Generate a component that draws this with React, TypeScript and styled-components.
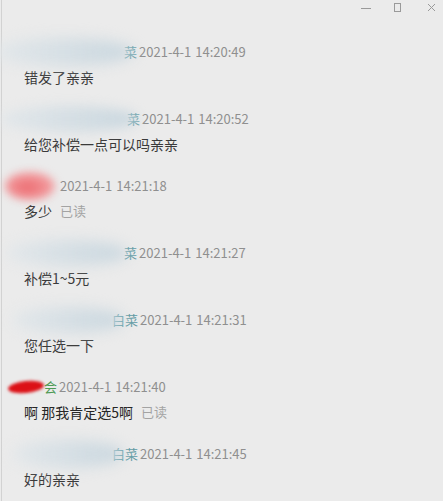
import React from 'react';
import styled, { createGlobalStyle } from 'styled-components';

const GlobalStyle = createGlobalStyle`
  html, body {
    margin: 0;
    padding: 0;
    background: #ebebeb;
  }
  body {
    font-family: "Noto Sans CJK SC", "Noto Sans", sans-serif;
  }
`;

const Window = styled.div`
  width: 443px;
  height: 501px;
  overflow: hidden;
  background: linear-gradient(to right, #ebebeb 1px, #d2d2d2 1px, #d2d2d2 2px, #ebebeb 2px);
`;

const TitleBar = styled.div`
  display: flex;
  justify-content: flex-end;
  align-items: center;
  height: 15px;
  padding-right: 6px;
`;

const Control = styled.span<{ $gap: number }>`
  display: flex;
  align-items: center;
  justify-content: center;
  width: 12px;
  height: 12px;
  margin-left: ${(p) => p.$gap}px;
`;

const List = styled.div`
  display: flex;
  flex-direction: column;
  gap: 22px;
  padding-top: 27px;
`;

const Block = styled.div`
  display: flex;
  flex-direction: column;
  gap: 5px;
`;

const Header = styled.div`
  display: flex;
  align-items: center;
  height: 20px;
  font-size: 13px;
  line-height: 20px;
  white-space: nowrap;
`;

const Mask = styled.span<{ $left: number; $w: number; $h: number; $bg: string; $blur: number; $overlap: number; $rot?: number }>`
  position: relative;
  z-index: 1;
  flex: none;
  display: inline-block;
  margin-left: ${(p) => p.$left}px;
  margin-right: -${(p) => p.$overlap}px;
  width: ${(p) => p.$w}px;
  height: ${(p) => p.$h}px;
  border-radius: 50%;
  background: ${(p) => p.$bg};
  filter: blur(${(p) => p.$blur}px);
  transform: rotate(${(p) => p.$rot ?? 0}deg);
`;

const Tail = styled.span<{ $color: string }>`
  color: ${(p) => p.$color};
`;

const Time = styled.span<{ $gap: number }>`
  margin-left: ${(p) => p.$gap}px;
  color: #8f8f8f;
  word-spacing: 1px;
`;

const Body = styled.div<{ $strong?: boolean }>`
  display: flex;
  align-items: center;
  height: 20px;
  padding-left: 24px;
  font-size: 14px;
  line-height: 20px;
  color: ${(p) => (p.$strong ? '#262626' : '#3a3a3a')};
`;

const Read = styled.span`
  margin-left: 8px;
  font-size: 13px;
  color: #a3a3a3;
`;

type Msg = {
  left: number;
  w: number;
  h: number;
  bg: string;
  blur: number;
  overlap: number;
  rot?: number;
  tail?: string;
  tailColor?: string;
  gap: number;
  time: string;
  text: string;
  read?: boolean;
  strong?: boolean;
};

const blue = 'linear-gradient(to right, #e2e7ea, #d3dde3 60%, #c9d7df)';

const messages: Msg[] = [
  { left: -6, w: 140, h: 28, bg: blue, blur: 7, overlap: 10, tail: '菜', tailColor: '#5f9aa3', gap: 2, time: '2021-4-1 14:20:49', text: '错发了亲亲' },
  { left: 0, w: 138, h: 26, bg: blue, blur: 6, overlap: 11, tail: '菜', tailColor: '#5f9aa3', gap: 2, time: '2021-4-1 14:20:52', text: '给您补偿一点可以吗亲亲' },
  { left: 5, w: 50, h: 28, bg: 'radial-gradient(ellipse at 45% 55%, #ec6a6f, #f29ea1 65%, #efc6c7)', blur: 4, overlap: 0, gap: 5, time: '2021-4-1 14:21:18', text: '多少', read: true },
  { left: 6, w: 122, h: 26, bg: blue, blur: 7, overlap: 4, tail: '菜', tailColor: '#5f9aa3', gap: 2, time: '2021-4-1 14:21:27', text: '补偿1~5元' },
  { left: 12, w: 112, h: 26, bg: blue, blur: 7, overlap: 12, tail: '白菜', tailColor: '#5f9aa3', gap: 2, time: '2021-4-1 14:21:31', text: '您任选一下' },
  { left: 8, w: 36, h: 12, bg: '#dc1016', blur: 1.5, overlap: 0, rot: -6, tail: '会', tailColor: '#4f9a55', gap: 2, time: '2021-4-1 14:21:40', text: '啊 那我肯定选5啊', read: true, strong: true },
  { left: 12, w: 112, h: 28, bg: blue, blur: 7, overlap: 12, tail: '白菜', tailColor: '#5f9aa3', gap: 2, time: '2021-4-1 14:21:45', text: '好的亲亲' },
];

const stroke = '#9a9a9a';

export default function App() {
  return (
    <>
      <GlobalStyle />
      <Window>
        <TitleBar>
          <Control $gap={0}>
            <svg width="10" height="10" viewBox="0 0 10 10">
              <line x1="0" y1="5.5" x2="10" y2="5.5" stroke={stroke} strokeWidth="1" />
            </svg>
          </Control>
          <Control $gap={19}>
            <svg width="9" height="9" viewBox="0 0 9 9">
              <rect x="1.5" y="0.5" width="6" height="8" fill="none" stroke={stroke} strokeWidth="1" />
            </svg>
          </Control>
          <Control $gap={22}>
            <svg width="9" height="9" viewBox="0 0 9 9">
              <path d="M1 1 L8 8 M8 1 L1 8" stroke={stroke} strokeWidth="1" />
            </svg>
          </Control>
        </TitleBar>
        <List>
          {messages.map((m, i) => (
            <Block key={i}>
              <Header>
                <Mask $left={m.left} $w={m.w} $h={m.h} $bg={m.bg} $blur={m.blur} $overlap={m.overlap} $rot={m.rot} />
                {m.tail && <Tail $color={m.tailColor ?? '#5f9aa3'}>{m.tail}</Tail>}
                <Time $gap={m.gap}>{m.time}</Time>
              </Header>
              <Body $strong={m.strong}>
                {m.text}
                {m.read && <Read>已读</Read>}
              </Body>
            </Block>
          ))}
        </List>
      </Window>
    </>
  );
}
